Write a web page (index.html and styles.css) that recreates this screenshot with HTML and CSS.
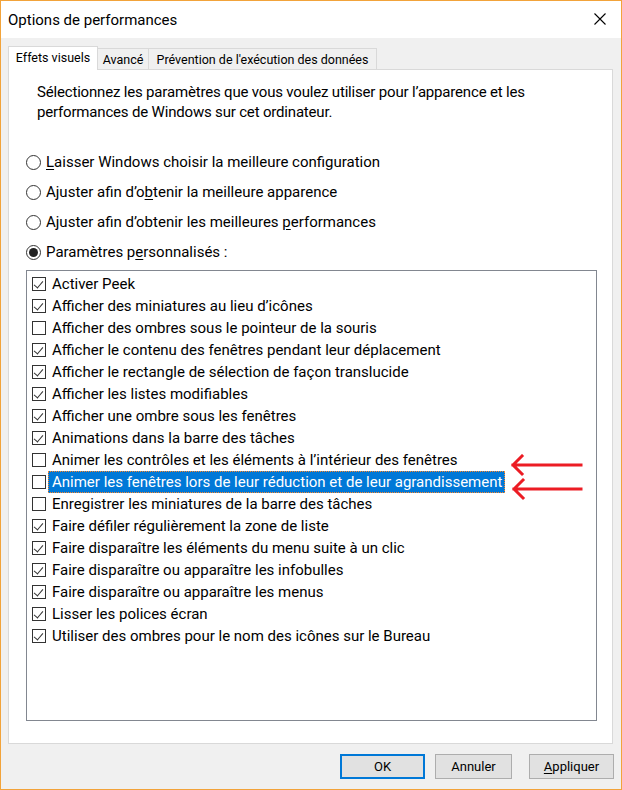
FILE: index.html
```html
<!DOCTYPE html>
<html lang="fr">
<head>
  <meta charset="UTF-8" />
  <title>Options de performances</title>
  <link rel="stylesheet" href="styles.css">
</head>
<body>
  <div class="window">
    <!-- Title bar -->
    <div class="titlebar">
      <span class="title">Options de performances</span>
      <svg class="close" width="12" height="12" viewBox="0 0 12 12">
        <path d="M0.5 0.5 L11.5 11.5 M11.5 0.5 L0.5 11.5" stroke="#000" stroke-width="1.1" fill="none"/>
      </svg>
    </div>

    <div class="content">
      <div class="tabs">
        <div class="tab active">Effets visuels</div>
        <div class="tab tab-avance">Avancé</div>
        <div class="tab tab-dep">Prévention de l'exécution des données</div>
      </div>

      <div class="panel">
        <p class="intro">Sélectionnez les paramètres que vous voulez utiliser pour l’apparence et les performances de Windows sur cet ordinateur.</p>

        <div class="radios">
          <div class="radio"><span class="dot"></span><span><u>L</u>aisser Windows choisir la meilleure configuration</span></div>
          <div class="radio"><span class="dot"></span><span>Ajuster afin d’o<u>b</u>tenir la meilleure apparence</span></div>
          <div class="radio"><span class="dot"></span><span>Ajuster afin d’obtenir les meilleures <u>p</u>erformances</span></div>
          <div class="radio checked"><span class="dot"></span><span>Paramètres p<u>e</u>rsonnalisés :</span></div>
        </div>

        <div class="list">
          <div class="item on"><span class="box"></span><span class="label">Activer Peek</span></div>
          <div class="item on"><span class="box"></span><span class="label">Afficher des miniatures au lieu d’icônes</span></div>
          <div class="item"><span class="box"></span><span class="label">Afficher des ombres sous le pointeur de la souris</span></div>
          <div class="item on"><span class="box"></span><span class="label">Afficher le contenu des fenêtres pendant leur déplacement</span></div>
          <div class="item on"><span class="box"></span><span class="label">Afficher le rectangle de sélection de façon translucide</span></div>
          <div class="item on"><span class="box"></span><span class="label">Afficher les listes modifiables</span></div>
          <div class="item on"><span class="box"></span><span class="label">Afficher une ombre sous les fenêtres</span></div>
          <div class="item on"><span class="box"></span><span class="label">Animations dans la barre des tâches</span></div>
          <div class="item"><span class="box"></span><span class="label">Animer les contrôles et les éléments à l’intérieur des fenêtres</span></div>
          <div class="item selected"><span class="box"></span><span class="label">Animer les fenêtres lors de leur réduction et de leur agrandissement</span></div>
          <div class="item"><span class="box"></span><span class="label">Enregistrer les miniatures de la barre des tâches</span></div>
          <div class="item on"><span class="box"></span><span class="label">Faire défiler régulièrement la zone de liste</span></div>
          <div class="item on"><span class="box"></span><span class="label">Faire disparaître les éléments du menu suite à un clic</span></div>
          <div class="item on"><span class="box"></span><span class="label">Faire disparaître ou apparaître les infobulles</span></div>
          <div class="item on"><span class="box"></span><span class="label">Faire disparaître ou apparaître les menus</span></div>
          <div class="item on"><span class="box"></span><span class="label">Lisser les polices écran</span></div>
          <div class="item on"><span class="box"></span><span class="label">Utiliser des ombres pour le nom des icônes sur le Bureau</span></div>
        </div>
      </div>

      <div class="buttons">
        <button class="btn btn-ok">OK</button>
        <button class="btn btn-cancel">Annuler</button>
        <button class="btn btn-apply"><u>A</u>ppliquer</button>
      </div>
    </div>

    <!-- Red annotation arrows -->
    <svg class="arrows" width="80" height="50" viewBox="0 0 80 50">
      <g stroke="#ec1c24" stroke-width="3" fill="none" stroke-linecap="square">
        <path d="M3 11 L71 11 M3 11 L12 2 M3 11 L12 20"/>
        <path d="M4 35 L71 35 M4 35 L13 26 M4 35 L13 44"/>
      </g>
    </svg>
  </div>
</body>
</html>
```

FILE: styles.css
```css
* {
  margin: 0;
  padding: 0;
  box-sizing: border-box;
}

body {
  font-family: Roboto, "Liberation Sans", sans-serif;
  color: #000;
  background: #f0f0f0;
}

.window {
  position: relative;
  width: 622px;
  height: 790px;
  border: 1px solid #f2a33a;
  background: #f0f0f0;
}

.titlebar {
  height: 37px;
  background: #fff;
  display: flex;
  align-items: center;
  justify-content: space-between;
  padding: 0 15px 0 7px;
}

.title {
  font-size: 15px;
}

.close {
  display: block;
  margin-top: -1px;
}

.content {
  padding: 8px 7px 0 7px;
}

/* Tabs */
.tabs {
  display: flex;
  align-items: flex-end;
  height: 24px;
  margin-bottom: -1px;
  position: relative;
  z-index: 1;
}

.tab {
  height: 21px;
  margin-bottom: 1px;
  border: 1px solid #d9d9d9;
  border-bottom: none;
  background: #f0f0f0;
  font-size: 12.5px;
  display: flex;
  align-items: center;
  justify-content: center;
}

.tab.active {
  width: 90px;
  height: 24px;
  margin-bottom: 0;
  background: #fff;
  padding-bottom: 2px;
}

.tab-avance {
  width: 52px;
  margin-left: -1px;
}

.tab-dep {
  width: 229px;
  margin-left: -1px;
}

.panel {
  height: 675px;
  width: 605px;
  background: #fff;
  border: 1px solid #d9d9d9;
  padding: 12px 15px 0 17px;
}

.intro {
  font-size: 15px;
  line-height: 20px;
  letter-spacing: -0.18px;
  padding-left: 11px;
  padding-right: 40px;
}

/* Radio options */
.radios {
  margin-top: 25px;
  display: flex;
  flex-direction: column;
}

.radio {
  height: 30px;
  display: flex;
  align-items: center;
  font-size: 15px;
}

.dot {
  width: 15px;
  height: 15px;
  border: 1px solid #333;
  border-radius: 50%;
  margin-right: 5px;
  position: relative;
  background: #fff;
}

.radio.checked .dot::after {
  content: '';
  position: absolute;
  top: 2px;
  left: 2px;
  width: 9px;
  height: 9px;
  border-radius: 50%;
  background: #222;
}

u {
  text-decoration: underline;
  text-underline-offset: 2px;
}

/* Checkbox list */
.list {
  margin-top: 3px;
  height: 451px;
  border: 1px solid #828790;
  padding: 2px 0 0 5px;
}

.item {
  height: 22px;
  display: flex;
  align-items: center;
  font-size: 15px;
}

.box {
  width: 14px;
  height: 14px;
  border: 1px solid #333;
  background: #fff;
  flex-shrink: 0;
  margin-right: 2px;
  position: relative;
}

.item.on .box::after {
  content: '';
  position: absolute;
  left: 3px;
  top: 1px;
  width: 4px;
  height: 8px;
  border-right: 1px solid #333;
  border-bottom: 1px solid #333;
  transform: rotate(40deg);
}

.label {
  padding: 0 2px 0 3px;
  height: 22px;
  line-height: 20px;
  border: 1px solid transparent;
}

.item.selected .label {
  background: #0078d7;
  color: #fff;
  border: 1px dotted #ff8728;
}

/* Buttons */
.buttons {
  display: flex;
  justify-content: flex-end;
  margin-top: 10px;
}

.btn {
  height: 25px;
  font-family: Roboto, "Liberation Sans", sans-serif;
  font-size: 13px;
  background: #e1e1e1;
  border: 1px solid #adadad;
  color: #000;
}

.btn-ok {
  width: 85px;
  border: 2px solid #0078d7;
}

.btn-cancel {
  width: 77px;
  margin-left: 10px;
}

.btn-apply {
  width: 85px;
  margin-left: 17px;
}

.arrows {
  position: absolute;
  left: 509px;
  top: 453px;
}
```
